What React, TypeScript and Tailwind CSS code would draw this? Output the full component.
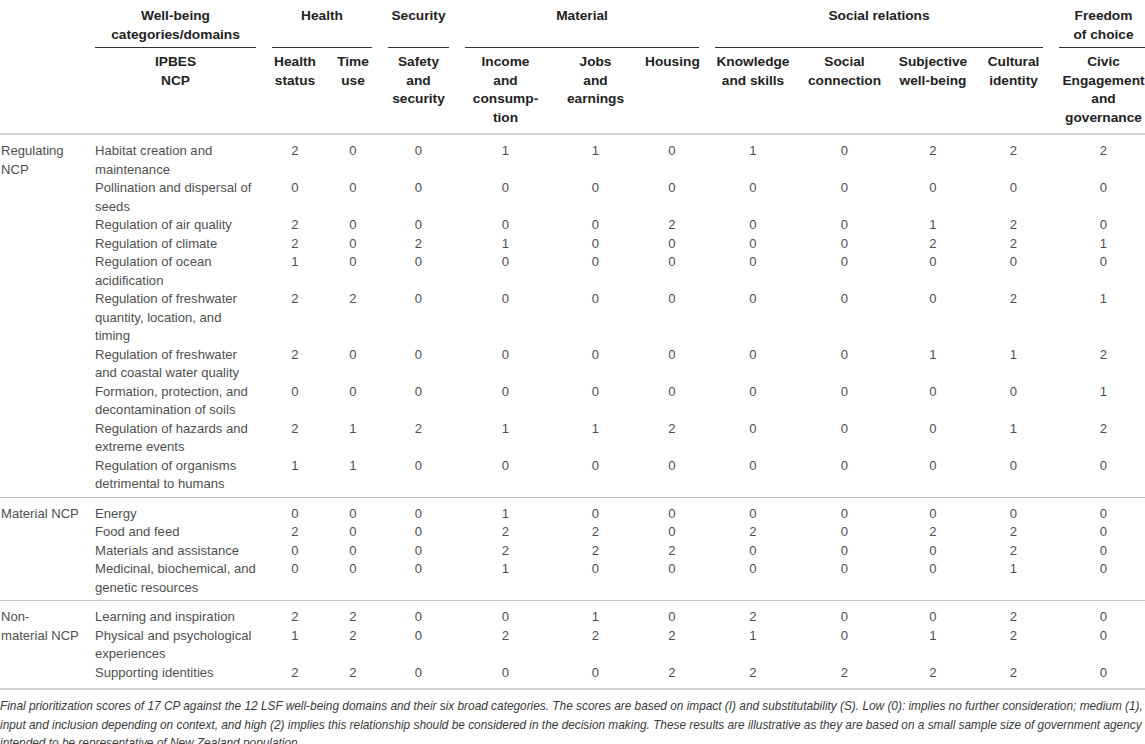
import React from "react";

type Row = { name: string[]; v: number[] };
type Group = { cat: string[]; rows: Row[]; last?: boolean };

const groups: Group[] = [
  {
    cat: ["Regulating", "NCP"],
    rows: [
      { name: ["Habitat creation and", "maintenance"], v: [2, 0, 0, 1, 1, 0, 1, 0, 2, 2, 2] },
      { name: ["Pollination and dispersal of", "seeds"], v: [0, 0, 0, 0, 0, 0, 0, 0, 0, 0, 0] },
      { name: ["Regulation of air quality"], v: [2, 0, 0, 0, 0, 2, 0, 0, 1, 2, 0] },
      { name: ["Regulation of climate"], v: [2, 0, 2, 1, 0, 0, 0, 0, 2, 2, 1] },
      { name: ["Regulation of ocean", "acidification"], v: [1, 0, 0, 0, 0, 0, 0, 0, 0, 0, 0] },
      { name: ["Regulation of freshwater", "quantity, location, and", "timing"], v: [2, 2, 0, 0, 0, 0, 0, 0, 0, 2, 1] },
      { name: ["Regulation of freshwater", "and coastal water quality"], v: [2, 0, 0, 0, 0, 0, 0, 0, 1, 1, 2] },
      { name: ["Formation, protection, and", "decontamination of soils"], v: [0, 0, 0, 0, 0, 0, 0, 0, 0, 0, 1] },
      { name: ["Regulation of hazards and", "extreme events"], v: [2, 1, 2, 1, 1, 2, 0, 0, 0, 1, 2] },
      { name: ["Regulation of organisms", "detrimental to humans"], v: [1, 1, 0, 0, 0, 0, 0, 0, 0, 0, 0] },
    ],
  },
  {
    cat: ["Material NCP"],
    rows: [
      { name: ["Energy"], v: [0, 0, 0, 1, 0, 0, 0, 0, 0, 0, 0] },
      { name: ["Food and feed"], v: [2, 0, 0, 2, 2, 0, 2, 0, 2, 2, 0] },
      { name: ["Materials and assistance"], v: [0, 0, 0, 2, 2, 2, 0, 0, 0, 2, 0] },
      { name: ["Medicinal, biochemical, and", "genetic resources"], v: [0, 0, 0, 1, 0, 0, 0, 0, 0, 1, 0] },
    ],
  },
  {
    cat: ["Non-", "material NCP"],
    last: true,
    rows: [
      { name: ["Learning and inspiration"], v: [2, 2, 0, 0, 1, 0, 2, 0, 0, 2, 0] },
      { name: ["Physical and psychological", "experiences"], v: [1, 2, 0, 2, 2, 2, 1, 0, 1, 2, 0] },
      { name: ["Supporting identities"], v: [2, 2, 0, 0, 0, 2, 2, 2, 2, 2, 0] },
    ],
  },
];

const sub: string[][] = [
  ["Health", "status"],
  ["Time", "use"],
  ["Safety", "and", "security"],
  ["Income", "and", "consump-", "tion"],
  ["Jobs", "and", "earnings"],
  ["Housing"],
  ["Knowledge", "and skills"],
  ["Social", "connection"],
  ["Subjective", "well-being"],
  ["Cultural", "identity"],
  ["Civic", "Engagement", "and", "governance"],
];

const top: { t: string[]; span: number }[] = [
  { t: ["Health"], span: 2 },
  { t: ["Security"], span: 1 },
  { t: ["Material"], span: 3 },
  { t: ["Social relations"], span: 4 },
  { t: ["Freedom", "of choice"], span: 1 },
];

function Lines({ l }: { l: string[] }) {
  return (
    <>
      {l.map((s, i) => (
        <React.Fragment key={i}>
          {i > 0 && <br />}
          {s}
        </React.Fragment>
      ))}
    </>
  );
}

export default function App() {
  return (
    <div className="w-[1145px] h-[744px] overflow-hidden bg-white font-['Liberation_Sans',Arial,sans-serif]">
      <table className="table-fixed border-collapse w-[1156px]">
        <colgroup>
          <col className="w-[87px]" />
          <col className="w-[177px]" />
          <col className="w-[62px]" />
          <col className="w-[54px]" />
          <col className="w-[77px]" />
          <col className="w-[97px]" />
          <col className="w-[83px]" />
          <col className="w-[70px]" />
          <col className="w-[92px]" />
          <col className="w-[91px]" />
          <col className="w-[86px]" />
          <col className="w-[75px]" />
          <col className="w-[105px]" />
        </colgroup>
        <thead>
          <tr className="text-[13.7px] leading-[18.5px] font-bold text-[#222]">
            <td className="p-0"></td>
            <td className="px-2 pt-[7px] pb-0 align-top">
              <div className="h-[41px] border-b border-[#333] text-center whitespace-nowrap">
                Well-being
                <br />
                categories/domains
              </div>
            </td>
            {top.map((g, i) => (
              <td key={i} colSpan={g.span} className="px-2 pt-[7px] pb-0 align-top">
                <div className="h-[41px] border-b border-[#333] text-center whitespace-nowrap">
                  <Lines l={g.t} />
                </div>
              </td>
            ))}
          </tr>
          <tr className="text-[13.7px] leading-[18.5px] font-bold text-[#222] border-b-2 border-[#d2d2d2]">
            <td className="p-0"></td>
            <td className="px-2 pt-[5px] pb-[6px] align-top text-center whitespace-nowrap">
              IPBES
              <br />
              NCP
            </td>
            {sub.map((s, i) => (
              <td key={i} className="px-2 pt-[5px] pb-[6px] align-top text-center whitespace-nowrap">
                <Lines l={s} />
              </td>
            ))}
          </tr>
        </thead>
        <tbody className="text-[13.1px] leading-[18.5px] text-[#4f4f4f]">
          {groups.map((g, gi) =>
            g.rows.map((r, ri) => {
              const first = ri === 0;
              const lastRow = ri === g.rows.length - 1;
              const pad = first ? "pt-[7px] pb-0" : lastRow ? (g.last ? "pt-0 pb-[6px]" : "pt-0 pb-[3px]") : "py-0";
              const rowBorder = lastRow ? (g.last ? "border-b-2 border-[#d2d2d2]" : "border-b border-[#c4c4c4]") : "";
              return (
                <tr key={`${gi}-${ri}`} className={rowBorder}>
                  {first && (
                    <td rowSpan={g.rows.length} className="pl-[1px] pr-0 pt-[7px] align-top whitespace-nowrap">
                      <Lines l={g.cat} />
                    </td>
                  )}
                  <td className={`px-2 align-top whitespace-nowrap ${pad}`}>
                    <Lines l={r.name} />
                  </td>
                  {r.v.map((n, i) => (
                    <td key={i} className={`px-2 align-top text-center ${pad}`}>
                      {n}
                    </td>
                  ))}
                </tr>
              );
            })
          )}
        </tbody>
      </table>
      <div className="pt-[7px] text-[11.85px] leading-[18.5px] italic text-[#3a3a3a] whitespace-nowrap">
        <div>
          Final prioritization scores of 17 CP against the 12 LSF well-being domains and their six broad categories. The scores are based on impact (I) and substitutability (S). Low (0): implies no further consideration; medium (1), requires further
        </div>
        <div>
          input and inclusion depending on context, and high (2) implies this relationship should be considered in the decision making. These results are illustrative as they are based on a small sample size of government agency experts and are not
        </div>
        <div>intended to be representative of New Zealand population.</div>
      </div>
    </div>
  );
}
